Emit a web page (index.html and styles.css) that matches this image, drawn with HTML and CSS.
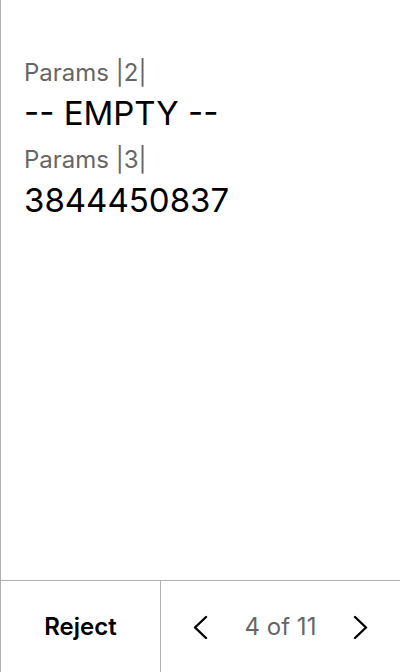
FILE: index.html
```html
<!DOCTYPE html>
<html lang="en">
<head>
<meta charset="utf-8">
<title>Params</title>
<link rel="stylesheet" href="styles.css">
</head>
<body>
<div class="screen">
  <main class="content">
    <div class="field">
      <div class="label">Params |2|</div>
      <div class="value">-- EMPTY --</div>
    </div>
    <div class="field">
      <div class="label">Params |3|</div>
      <div class="value">3844450837</div>
    </div>
  </main>
  <footer class="footer">
    <button class="reject">Reject</button>
    <div class="pager">
      <svg class="chev" width="16" height="24" viewBox="0 0 16 24"><polyline points="14,2 3,12.5 14,23" fill="none" stroke="#000" stroke-width="2.4" stroke-linecap="round" stroke-linejoin="round"/></svg>
      <span class="count">4 of 11</span>
      <svg class="chev" width="16" height="24" viewBox="0 0 16 24"><polyline points="2,2 13,12.5 2,23" fill="none" stroke="#000" stroke-width="2.4" stroke-linecap="round" stroke-linejoin="round"/></svg>
    </div>
  </footer>
</div>
</body>
</html>
```
FILE: styles.css
```css
* { box-sizing: border-box; }
html, body { margin: 0; padding: 0; background: #fff; }
body { font-family: Inter, "Noto Sans", sans-serif; color: #000; }
.screen {
  width: 400px;
  height: 672px;
  border-left: 1px solid #b0b0b0;
  display: flex;
  flex-direction: column;
}
.content {
  flex: 1;
  padding: 58px 23px 0;
  display: flex;
  flex-direction: column;
  gap: 12px;
}
.label {
  font-size: 24px;
  line-height: 29px;
  color: #666;
}
.value {
  font-size: 33px;
  line-height: 40px;
  margin-top: 6px;
}
.footer {
  height: 92px;
  border-top: 1px solid #b0b0b0;
  display: grid;
  grid-template-columns: 160px 1fr;
}
.reject {
  border: 0;
  border-right: 1px solid #b0b0b0;
  background: none;
  font-family: inherit;
  font-size: 24px;
  font-weight: 600;
  color: #000;
  padding: 0;
}
.pager {
  display: flex;
  align-items: center;
  justify-content: space-between;
  padding: 0 31px 0 31px;
}
.count {
  font-size: 24px;
  color: #666;
}
.chev { display: block; }
```
